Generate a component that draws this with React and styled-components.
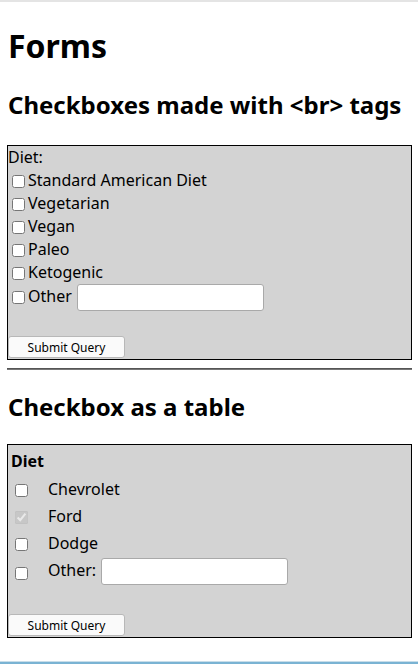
import React from "react";
import styled, { createGlobalStyle } from "styled-components";

const GlobalStyle = createGlobalStyle`
	html, body {
		margin: 0;
		padding: 0;
		background: #fff;
	}
	body {
		font-family: "Noto Sans", "Open Sans", sans-serif;
		font-size: 16px;
		color: #000;
	}
`;

const diets = ["Standard American Diet", "Vegetarian", "Vegan", "Paleo", "Ketogenic"];
const cars = [
	{ name: "Chevrolet" },
	{ name: "Ford", checked: true },
	{ name: "Dodge" },
];

export default function App() {
	return (
		<>
			<GlobalStyle />
			<TopRule />
			<Page>
				<Title>Forms</Title>
				<Subtitle>Checkboxes made with &lt;br&gt; tags</Subtitle>
				<BrForm onSubmit={(e) => e.preventDefault()}>
					Diet:
					<br />
					{diets.map((d) => (
						<React.Fragment key={d}>
							<Check type="checkbox" />
							{d}
							<br />
						</React.Fragment>
					))}
					<Check type="checkbox" />
					Other <TextField type="text" />
					<br />
					<br />
					<SubmitButton type="submit" value="Submit Query" />
				</BrForm>
				<Rule />
				<Subtitle $tight>Checkbox as a table</Subtitle>
				<TableBox onSubmit={(e) => e.preventDefault()}>
					<DietTable>
						<tbody>
							<tr>
								<HeadCell>Diet</HeadCell>
								<Cell />
							</tr>
							{cars.map((c) => (
								<tr key={c.name}>
									<Cell>
										<Check type="checkbox" defaultChecked={c.checked} disabled={c.checked} />
									</Cell>
									<Cell>{c.name}</Cell>
								</tr>
							))}
							<tr>
								<Cell>
									<Check type="checkbox" />
								</Cell>
								<Cell>
									Other: <TextField type="text" />
								</Cell>
							</tr>
						</tbody>
					</DietTable>
					<SubmitButton type="submit" value="Submit Query" />
				</TableBox>
			</Page>
			<Footer />
		</>
	);
}

const TopRule = styled.div`
	height: 2px;
	background-color: #e4e4e4;
`;

const Page = styled.div`
	padding: 0 6px 0 7px;
	display: flow-root;
`;

const Title = styled.h1`
	font-size: 32px;
	font-weight: 700;
	margin: 22px 0 21px 1px;
`;

const Subtitle = styled.h2`
	font-size: 24px;
	font-weight: 700;
	margin: ${(p) => (p.$tight ? "20px 0 21px 1px" : "20px 0 24px 1px")};
`;

const BrForm = styled.form`
	border: 1px solid #000;
	background-color: lightgray;
	line-height: 23px;
	padding: 0 0 1px 0;
`;

const Check = styled.input`
	margin: 3px 3px 3px 4px;
	vertical-align: -2px;
`;

const TextField = styled.input`
	width: 187px;
	height: 27px;
	box-sizing: border-box;
	margin-left: 1px;
	border: 1px solid #a9a9a9;
	border-radius: 3px;
	background: #fff;
	vertical-align: middle;
	font-family: "Noto Sans", sans-serif;
`;

const SubmitButton = styled.input`
	width: 117px;
	height: 22px;
	box-sizing: border-box;
	border: 1px solid #b8b8b8;
	border-radius: 3px;
	background: #fafafa;
	font-family: "Noto Sans", sans-serif;
	font-size: 12px;
	color: #000;
	margin: 2px 0 0 0;
	vertical-align: bottom;
`;

const Rule = styled.hr`
	border: none;
	border-top: 1px solid #555;
	border-bottom: 1px solid #777;
	margin: 8px 0 0 0;
`;

const TableBox = styled.form`
	border: 1px solid #000;
	background-color: lightgray;
	line-height: 22px;
	padding: 0 0 1px 0;
`;

const DietTable = styled.table`
	border-spacing: 2px;
	margin-bottom: 24px;
`;

const HeadCell = styled.th`
	text-align: left;
	padding: 3px 1px 2px 1px;
`;

const Cell = styled.td`
	padding: 1px;
	height: 23px;
`;

const Footer = styled.div`
	position: fixed;
	left: 0;
	right: 0;
	bottom: 0;
	height: 2px;
	background-color: #7ab3d3;
	border-top: 1px solid #c8dde9;
`;
